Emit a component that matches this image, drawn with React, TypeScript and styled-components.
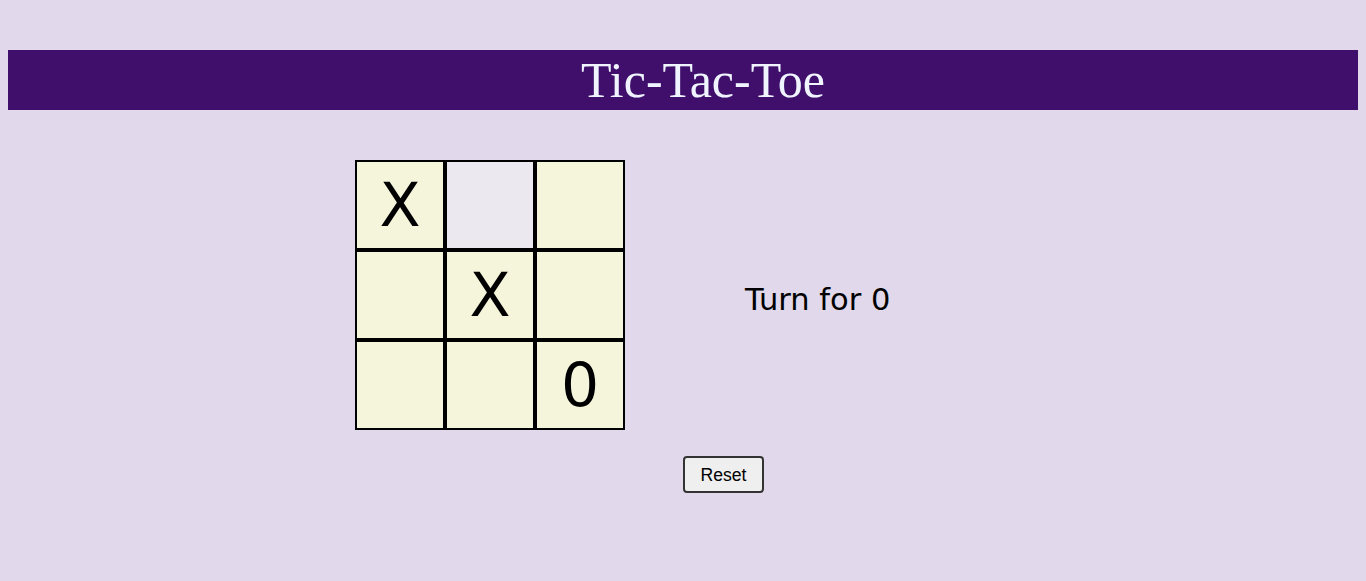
import React from "react";
import styled, { createGlobalStyle } from "styled-components";

const GlobalStyle = createGlobalStyle`
  html, body {
    margin: 0;
    padding: 0;
    background: #e1d8eb;
  }
  body {
    margin: 8px;
    font-family: "DejaVu Sans", Verdana, sans-serif;
  }
`;

const Page = styled.div`
  padding-top: 42px;
  display: flex;
  flex-direction: column;
`;

const Header = styled.header`
  height: 60px;
  background: #3f0f6b;
  display: flex;
  align-items: center;
  justify-content: center;
  padding-left: 40px;
`;

const Title = styled.h1`
  margin: 0;
  font-family: "Liberation Serif", "Times New Roman", serif;
  font-weight: normal;
  font-size: 50px;
  line-height: 1;
  color: #f0f4ff;
`;

const Main = styled.main`
  display: flex;
  align-items: center;
  gap: 120px;
  padding-left: 347px;
  margin-top: 50px;
`;

const BoardGrid = styled.div`
  width: 270px;
  height: 270px;
  display: grid;
  grid-template-columns: repeat(3, 90px);
  grid-template-rows: repeat(3, 90px);
`;

const Cell = styled.button<{ $active?: boolean }>`
  width: 90px;
  height: 90px;
  box-sizing: border-box;
  border: 2px solid #000;
  margin: 0;
  padding: 0;
  background: ${(p) => (p.$active ? "#ebe8f0" : "#f5f5dc")};
  font-family: "DejaVu Sans", Verdana, sans-serif;
  font-size: 60px;
  color: #000;
  display: flex;
  align-items: center;
  justify-content: center;
  line-height: 1;
  cursor: pointer;
`;

const Status = styled.div`
  font-family: "DejaVu Sans", Verdana, sans-serif;
  font-size: 30.5px;
  color: #000;
  padding-top: 8px;
`;

const Footer = styled.div`
  display: flex;
  justify-content: center;
  padding-left: 81px;
  margin-top: 26px;
`;

const ResetButton = styled.button`
  font-family: "Liberation Sans", Arial, sans-serif;
  font-size: 17.6px;
  line-height: 20px;
  padding: 7px 16px 6px;
  border: 2px solid #333;
  border-radius: 4px;
  background: #efefef;
  color: #000;
  cursor: pointer;
`;

const cells = ["X", "", "", "", "X", "", "", "", "0"];

export default function App() {
  return (
    <>
      <GlobalStyle />
      <Page>
        <Header>
          <Title>Tic-Tac-Toe</Title>
        </Header>
        <Main>
          <BoardGrid>
            {cells.map((c, i) => (
              <Cell key={i} $active={i === 1}>
                {c}
              </Cell>
            ))}
          </BoardGrid>
          <Status>Turn for 0</Status>
        </Main>
        <Footer>
          <ResetButton>Reset</ResetButton>
        </Footer>
      </Page>
    </>
  );
}
